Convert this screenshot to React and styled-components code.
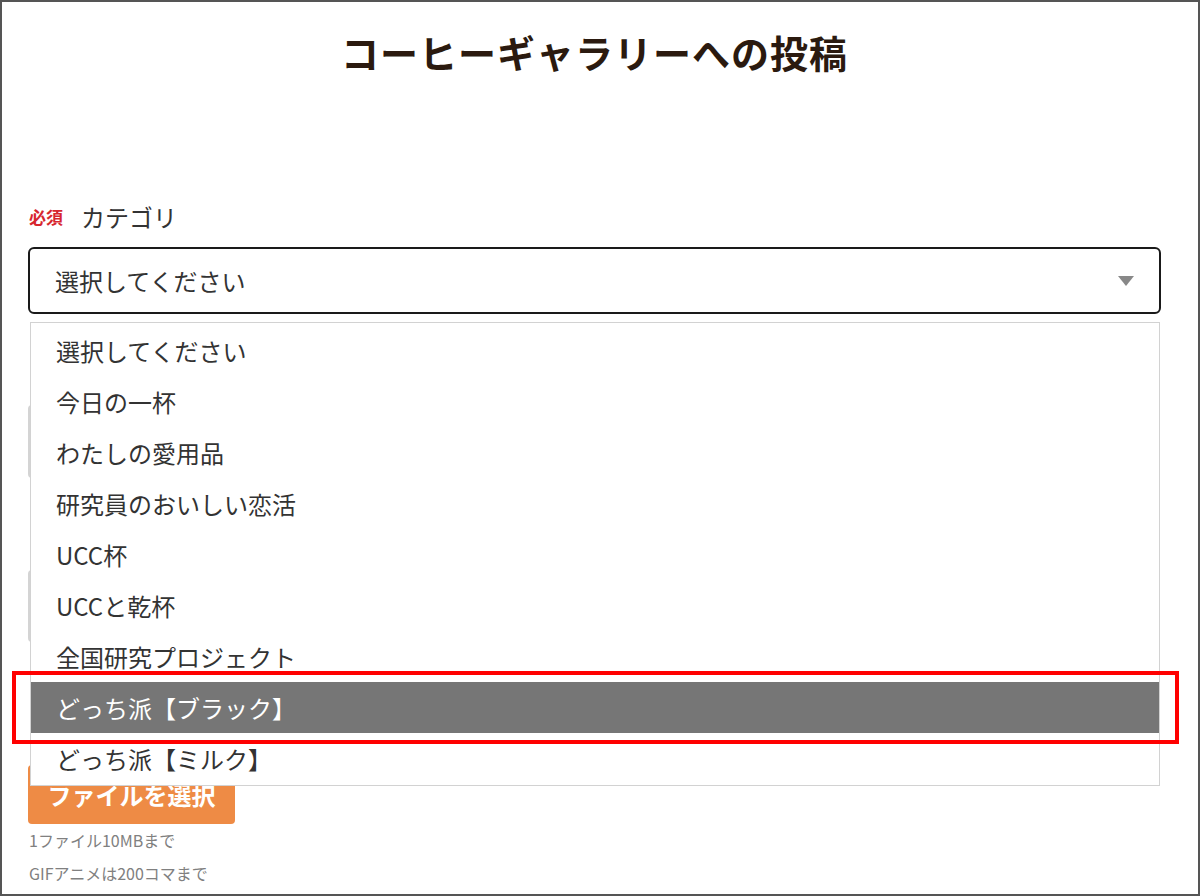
import React from "react"
import styled, { createGlobalStyle } from "styled-components"

const GlobalStyle = createGlobalStyle`
  html, body {
    margin: 0;
    padding: 0;
    background: #fff;
  }
  body {
    font-family: "Noto Sans CJK JP", "Noto Sans", sans-serif;
  }
`

const Frame = styled.div`
  box-sizing: border-box;
  width: 1200px;
  height: 896px;
  border: 2px solid #555;
  padding: 22px 37px 0 26px;
  background: #fff;
  overflow: hidden;
`

const Title = styled.h1`
  margin: 0;
  text-align: center;
  font-size: 38px;
  line-height: 56px;
  font-weight: 700;
  color: #2b1a0f;
  letter-spacing: 1px;
`

const Form = styled.div`
  margin-top: 122px;
  display: flex;
  flex-direction: column;
`

const Field = styled.div`
  display: flex;
  flex-direction: column;
  margin-top: ${(p) => p.$gap || 0}px;
`

const LabelRow = styled.div`
  display: flex;
  align-items: center;
  height: 30px;
  line-height: 30px;
`

const Required = styled.span`
  color: #d7262e;
  font-size: 17px;
  font-weight: 700;
  margin-left: 1px;
  margin-right: 18px;
`

const LabelText = styled.span`
  font-size: 24px;
  color: #333;
`

const Select = styled.div`
  position: relative;
  box-sizing: border-box;
  margin-top: 15px;
  height: 67px;
  border: 2px solid #1a1a1a;
  border-radius: 6px;
  display: flex;
  align-items: center;
  justify-content: space-between;
  padding: 0 25px 0 25px;
  font-size: 24px;
  color: #333;
  background: #fff;
`

const Arrow = styled.span`
  width: 0;
  height: 0;
  border-left: 8px solid transparent;
  border-right: 8px solid transparent;
  border-top: 10px solid #888;
`

const Dropdown = styled.ul`
  position: absolute;
  top: calc(100% + 10px);
  left: 0;
  right: -1px;
  margin: 0;
  padding: 2px 0 1px;
  list-style: none;
  border: 1px solid #d2d2d2;
  background: #fff;
  z-index: 2;
`

const Option = styled.li`
  position: relative;
  height: 51px;
  display: flex;
  align-items: center;
  padding-left: 25px;
  font-size: 24px;
  color: ${(p) => (p.$active ? "#fff" : "#333")};
  background: ${(p) => (p.$active ? "#767676" : "transparent")};

  ${(p) =>
    p.$active &&
    `
    &::after {
      content: "";
      position: absolute;
      top: -11px;
      bottom: -11px;
      left: -19px;
      right: -20px;
      border: 4px solid #ff0000;
      pointer-events: none;
    }
  `}
`

const Input = styled.div`
  box-sizing: border-box;
  margin-top: ${(p) => p.$gap || 5}px;
  margin-right: 4px;
  height: ${(p) => p.$h || 73}px;
  border: 1px solid #d4d4d4;
  border-left: 2px solid #d4d4d4;
  border-radius: 4px;
  background: #fff;
`

const FileButton = styled.button`
  margin-top: 123px;
  width: 207px;
  height: 59px;
  border: none;
  border-radius: 4px;
  background: #ee8b45;
  color: #fff;
  font-family: inherit;
  font-size: 24px;
  font-weight: 700;
  padding: 0;
  align-self: flex-start;
`

const Note = styled.div`
  font-size: 16px;
  line-height: 33px;
  color: #808080;
  margin-left: 1px;
  &:first-of-type {
    margin-top: 2px;
  }
`

const options = [
  "選択してください",
  "今日の一杯",
  "わたしの愛用品",
  "研究員のおいしい恋活",
  "UCC杯",
  "UCCと乾杯",
  "全国研究プロジェクト",
  "どっち派【ブラック】",
  "どっち派【ミルク】",
]

const App = () => {
  return (
    <>
      <GlobalStyle />
      <Frame>
        <Title>コーヒーギャラリーへの投稿</Title>
        <Form>
          <Field>
            <LabelRow>
              <Required>必須</Required>
              <LabelText>カテゴリ</LabelText>
            </LabelRow>
            <Select>
              <span>選択してください</span>
              <Arrow />
              <Dropdown>
                {options.map((o, i) => (
                  <Option key={o} $active={i === 7}>
                    {o}
                  </Option>
                ))}
              </Dropdown>
            </Select>
          </Field>
          <Field $gap={56}>
            <LabelRow />
            <Input />
          </Field>
          <Field $gap={52}>
            <LabelRow />
            <Input $gap={10} $h={72} />
          </Field>
          <FileButton>ファイルを選択</FileButton>
          <Note>1ファイル10MBまで</Note>
          <Note>GIFアニメは200コマまで</Note>
        </Form>
      </Frame>
    </>
  )
}

export default App
